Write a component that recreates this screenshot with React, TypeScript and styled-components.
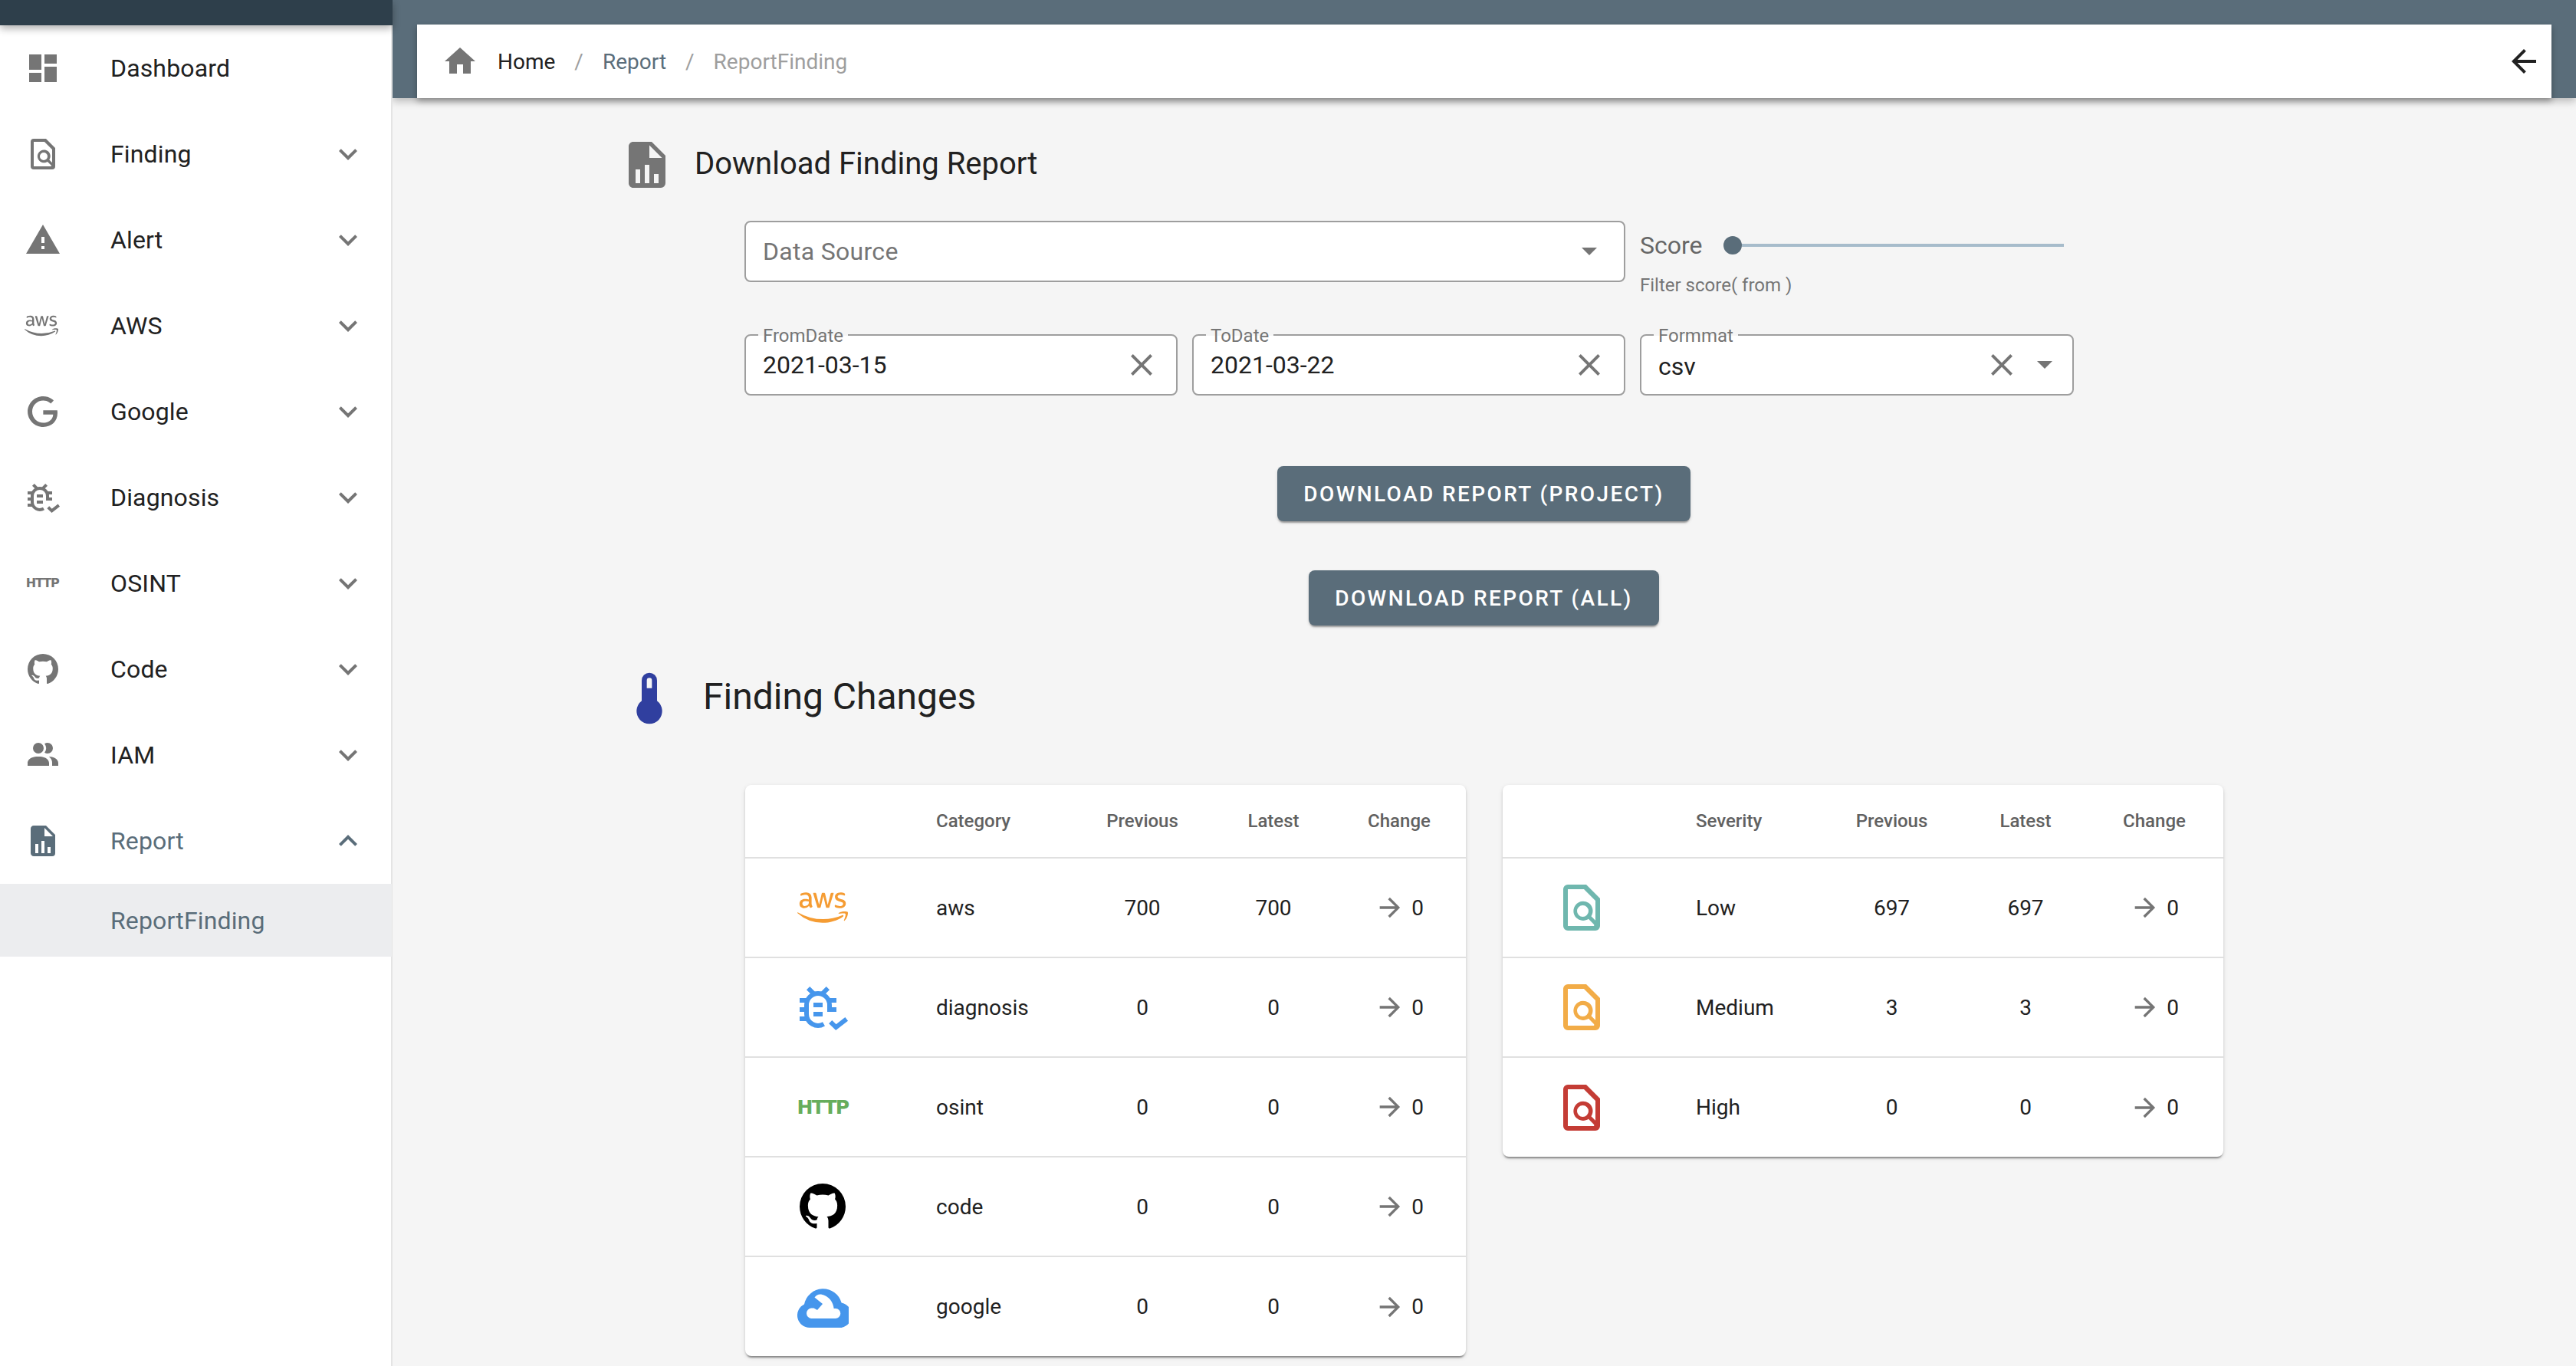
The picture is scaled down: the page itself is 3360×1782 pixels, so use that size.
import React from 'react';
import styled, { createGlobalStyle } from 'styled-components';
import { FaAws } from 'react-icons/fa';

const SLATE = '#5a6d7a';
const GREY = '#757575';

const Global = createGlobalStyle`
  html, body { margin: 0; padding: 0; background: #f5f5f5; }
  body { font-family: Roboto, "Liberation Sans", sans-serif; color: #212121; }
  * { box-sizing: border-box; }
`;

const Page = styled.div`
  display: grid;
  grid-template-columns: 512px 1fr;
  width: 3360px;
  height: 1782px;
  overflow: hidden;
  background: #f5f5f5;
`;

const Sidebar = styled.aside`
  display: flex;
  flex-direction: column;
  background: #fff;
  border-right: 2px solid #e4e4e4;
  height: 100%;
  position: relative;
  z-index: 1;
`;

const SideTop = styled.div`
  height: 33px;
  width: 512px;
  flex: none;
  background: #2e3f4b;
  box-shadow: 0 4px 10px rgba(0, 0, 0, 0.32);
  position: relative;
  z-index: 2;
`;

const NavItem = styled.div`
  display: flex;
  align-items: center;
  height: 112px;
  flex: none;
  padding: 0 32px;
  font-size: 32px;
`;

const NavIcon = styled.span<{ $active?: boolean }>`
  width: 112px;
  flex: none;
  display: flex;
  align-items: center;
  color: ${(p) => (p.$active ? SLATE : GREY)};
`;

const NavLabel = styled.span<{ $active?: boolean }>`
  flex: 1;
  color: ${(p) => (p.$active ? SLATE : '#212121')};
  letter-spacing: 0.15px;
`;

const SubItem = styled.div`
  height: 95px;
  flex: none;
  display: flex;
  align-items: center;
  padding-left: 144px;
  margin-right: -1px;
  background: #ecedef;
  font-size: 32px;
  color: ${SLATE};
  letter-spacing: 0.15px;
`;

const HttpMark = styled.span<{ $size: number; $color: string }>`
  font-family: "DejaVu Sans", sans-serif;
  font-weight: 700;
  font-size: ${(p) => p.$size}px;
  letter-spacing: ${(p) => -p.$size / 14}px;
  color: ${(p) => p.$color};
  line-height: 1;
  display: block;
  width: ${(p) => p.$size * 2.9}px;
  text-align: center;
`;

const Main = styled.main`
  display: flex;
  flex-direction: column;
  min-width: 0;
`;

const TopBand = styled.div`
  background: ${SLATE};
  padding: 32px 32px 0;
  height: 128px;
  flex: none;
  box-shadow: 0 4px 10px rgba(0, 0, 0, 0.25);
`;

const Crumbs = styled.nav`
  height: 96px;
  background: #fff;
  display: flex;
  align-items: center;
  padding: 0 12px 0 32px;
  font-size: 28px;
  box-shadow: 0 4px 8px rgba(0, 0, 0, 0.3);
`;

const CrumbHome = styled.span`
  display: flex;
  color: ${GREY};
  margin-right: 25px;
`;

const Crumb = styled.span<{ $tone: string }>`
  color: ${(p) => p.$tone};
`;

const CrumbSep = styled.span`
  color: #9e9e9e;
  margin: 0 25px;
`;

const CrumbSpacer = styled.span`
  flex: 1;
`;

const Content = styled.div`
  padding: 51px 0 0 296px;
  display: flex;
  flex-direction: column;
`;

const Heading = styled.div<{ $gap: number; $shift: number }>`
  display: flex;
  align-items: center;
  gap: ${(p) => p.$gap}px;
  margin-left: ${(p) => p.$shift}px;
`;

const HeadingIcon = styled.span<{ $color: string }>`
  display: flex;
  color: ${(p) => p.$color};
`;

const H1 = styled.h2`
  margin: 0 0 4px;
  font-size: 40px;
  font-weight: 400;
  color: #212121;
  letter-spacing: 0;
`;

const H2 = styled.h2`
  margin: 0 0 6px;
  font-size: 48px;
  font-weight: 400;
  color: #212121;
`;

const Block = styled.div`
  margin-left: 163px;
  width: 1929px;
`;

const FormGrid = styled.div`
  display: grid;
  grid-template-columns: 565px 565px 566px;
  grid-template-rows: 80px 80px;
  column-gap: 19px;
  row-gap: 68px;
  margin-top: 37px;
`;

const Field = styled.div<{ $span?: number }>`
  grid-column: span ${(p) => p.$span ?? 1};
  position: relative;
  display: flex;
  align-items: center;
  gap: 0;
  padding: 0 22px;
  background: #fff;
  border: 2px solid #9e9e9e;
  border-radius: 8px;
  font-size: 32px;
`;

const FieldLabel = styled.span`
  position: absolute;
  left: 16px;
  top: -14px;
  line-height: 28px;
  padding: 0 6px;
  font-size: 24px;
  color: ${GREY};
  background: linear-gradient(#f5f5f5 50%, #fff 50%);
`;

const Placeholder = styled.span`
  flex: 1;
  color: ${GREY};
  letter-spacing: 0.3px;
`;

const FieldValue = styled.span<{ $drop?: number }>`
  flex: 1;
  color: #212121;
  position: relative;
  top: ${(p) => p.$drop ?? 0}px;
`;

const FieldIcon = styled.span<{ $shift?: number }>`
  display: flex;
  flex: none;
  color: ${GREY};
  margin-right: ${(p) => p.$shift ?? 0}px;
`;

const Caret = styled.span<{ $shift: number }>`
  width: 0;
  height: 0;
  flex: none;
  border-left: 10px solid transparent;
  border-right: 10px solid transparent;
  border-top: 10px solid ${GREY};
  margin-right: ${(p) => p.$shift}px;
`;

const ScoreCell = styled.div`
  display: flex;
  flex-direction: column;
`;

const ScoreRow = styled.div`
  display: flex;
  align-items: center;
  height: 64px;
  flex: none;
`;

const ScoreLabel = styled.span`
  font-size: 32px;
  color: #666;
  width: 109px;
  flex: none;
`;

const Thumb = styled.span`
  width: 24px;
  height: 24px;
  flex: none;
  border-radius: 50%;
  background: ${SLATE};
`;

const Track = styled.span`
  width: 420px;
  height: 4px;
  flex: none;
  background: #a7bccb;
`;

const Helper = styled.span`
  font-size: 24px;
  line-height: 28px;
  margin-top: 6px;
  color: ${GREY};
  white-space: nowrap;
`;

const Buttons = styled.div`
  display: flex;
  flex-direction: column;
  align-items: center;
  gap: 64px;
  margin-top: 92px;
`;

const Button = styled.button`
  height: 72px;
  border: 0;
  padding: 0 34px;
  border-radius: 8px;
  background: ${SLATE};
  color: #fff;
  font-family: inherit;
  font-size: 28px;
  font-weight: 500;
  letter-spacing: 2.4px;
  text-transform: uppercase;
  box-shadow: 0 3px 2px -1px rgba(0, 0, 0, 0.3), 0 2px 4px rgba(0, 0, 0, 0.12);
`;

const ChangesHeading = styled.div`
  margin-top: 55px;
`;

const Tables = styled.div`
  display: flex;
  gap: 48px;
  margin-top: 73px;
  margin-left: 1px;
  align-items: flex-start;
`;

const Card = styled.div`
  width: 940px;
  background: #fff;
  border-radius: 8px;
  box-shadow: 0 4px 2px -2px rgba(0, 0, 0, 0.3), 0 2px 3px rgba(0, 0, 0, 0.14), 0 2px 6px rgba(0, 0, 0, 0.1);
  overflow: hidden;
`;

const Table = styled.table`
  width: 940px;
  table-layout: fixed;
  border-collapse: collapse;
`;

const Th = styled.th<{ $left?: boolean }>`
  height: 95px;
  padding: 0 ${(p) => (p.$left ? '0 0 32px' : '0')};
  font-size: 24px;
  font-weight: 500;
  color: #616161;
  text-align: ${(p) => (p.$left ? 'left' : 'center')};
  border-bottom: 2px solid #e0e0e0;
`;

const Tr = styled.tr`
  &:last-child td { border-bottom: 0; }
`;

const Td = styled.td<{ $left?: boolean }>`
  height: 130px;
  padding: 0 ${(p) => (p.$left ? '0 0 32px' : '0')};
  font-size: 28px;
  color: #212121;
  text-align: ${(p) => (p.$left ? 'left' : 'center')};
  border-bottom: 2px solid #e0e0e0;
`;

const IconTd = styled.td<{ $pad: number }>`
  height: 130px;
  padding: 0 0 0 ${(p) => p.$pad}px;
  border-bottom: 2px solid #e0e0e0;
`;

const IconBox = styled.span<{ $color: string }>`
  width: 72px;
  height: 72px;
  display: flex;
  align-items: center;
  justify-content: center;
  color: ${(p) => p.$color};
`;

const ChangeValue = styled.span`
  display: inline-flex;
  align-items: center;
  gap: 8px;
  vertical-align: middle;
`;

const ArrowWrap = styled.span`
  display: flex;
  color: ${GREY};
`;

type IconProps = { size?: number };
const mk = (d: string) => ({ size = 48 }: IconProps) => (
  <svg width={size} height={size} viewBox="0 0 24 24" fill="currentColor">
    <path fillRule="evenodd" d={d} />
  </svg>
);

const Dashboard = mk('M3 13h8V3H3v10zm0 8h8v-6H3v6zm10 0h8V11h-8v10zm0-18v6h8V3h-8z');
const FileFind = mk('M14,2H6A2,2 0 0,0 4,4V20A2,2 0 0,0 6,22H18A2,2 0 0,0 20,20V8L14,2M6,4H13L18,9V17.58L16.16,15.74C17.44,13.8 16.9,11.2 14.97,9.93C13.03,8.65 10.43,9.19 9.15,11.13C7.87,13.07 8.41,15.67 10.35,16.95C11.75,17.87 13.57,17.87 14.97,16.95L17.42,19.39L17.4,20H6V4M12.5,11A2.5,2.5 0 0,1 15,13.5A2.5,2.5 0 0,1 12.5,16A2.5,2.5 0 0,1 10,13.5A2.5,2.5 0 0,1 12.5,11Z');
const Warning = mk('M1 21h22L12 2 1 21zm12-3h-2v-2h2v2zm0-4h-2v-4h2v4z');
const GoogleG = mk('M21.35,11.1H12.18V13.83H18.69C18.36,17.64 15.19,19.27 12.19,19.27C8.36,19.27 5,16.25 5,12C5,7.9 8.2,4.73 12.2,4.73C15.29,4.73 17.1,6.7 17.1,6.7L19,4.72C19,4.72 16.56,2 12.1,2C6.42,2 2.03,6.8 2.03,12C2.03,17.05 6.16,22 12.25,22C17.6,22 21.5,18.33 21.5,12.91C21.5,11.76 21.35,11.1 21.35,11.1V11.1Z');
const Github = mk('M12,2A10,10 0 0,0 2,12C2,16.42 4.87,20.17 8.84,21.5C9.34,21.58 9.5,21.27 9.5,21C9.5,20.77 9.5,20.14 9.5,19.31C6.73,19.91 6.14,17.97 6.14,17.97C5.68,16.81 5.03,16.5 5.03,16.5C4.12,15.88 5.1,15.9 5.1,15.9C6.1,15.97 6.63,16.93 6.63,16.93C7.5,18.45 8.97,18 9.54,17.76C9.63,17.11 9.89,16.67 10.17,16.42C7.95,16.17 5.62,15.31 5.62,11.5C5.62,10.39 6,9.5 6.65,8.79C6.55,8.54 6.2,7.5 6.75,6.15C6.75,6.15 7.59,5.88 9.5,7.17C10.29,6.95 11.15,6.84 12,6.84C12.85,6.84 13.71,6.95 14.5,7.17C16.41,5.88 17.25,6.15 17.25,6.15C17.8,7.5 17.45,8.54 17.35,8.79C18,9.5 18.38,10.39 18.38,11.5C18.38,15.32 16.04,16.16 13.81,16.41C14.17,16.72 14.5,17.33 14.5,18.26C14.5,19.6 14.5,20.68 14.5,21C14.5,21.27 14.66,21.59 15.17,21.5C19.14,20.16 22,16.42 22,12A10,10 0 0,0 12,2Z');
const People = mk('M16 17V19H2V17S2 13 9 13 16 17 16 17M12.5 7.5A3.5 3.5 0 1 0 9 11A3.5 3.5 0 0 0 12.5 7.5M15.94 13A5.32 5.32 0 0 1 18 17V19H22V17S22 13.37 15.94 13M15 4A3.39 3.39 0 0 0 13.07 4.59A5 5 0 0 1 13.07 10.41A3.39 3.39 0 0 0 15 11A3.5 3.5 0 0 0 15 4Z');
const FileChart = mk('M13,9H18.5L13,3.5V9M6,2H14L20,8V20A2,2 0 0,1 18,22H6C4.89,22 4,21.1 4,20V4C4,2.89 4.89,2 6,2M7,20H9V14H7V20M11,20H13V12H11V20M15,20H17V16H15V20Z');
const Chevron = mk('M16.59 8.59L12 13.17 7.41 8.59 6 10l6 6 6-6z');
const ChevronUp = mk('M12 8l-6 6 1.41 1.41L12 10.83l4.59 4.58L18 14z');
const Home = mk('M10 20v-6h4v6h5v-8h3L12 3 2 12h3v8z');
const ArrowBack = mk('M20 11H7.83l5.59-5.59L12 4l-8 8 8 8 1.41-1.41L7.83 13H20v-2z');
const Close = mk('M19 6.41L17.59 5 12 10.59 6.41 5 5 6.41 10.59 12 5 17.59 6.41 19 12 13.41 17.59 19 19 17.59 13.41 12z');
const Thermometer = mk('M15 13V5A3 3 0 0 0 9 5V13A5 5 0 1 0 15 13M12 4A1 1 0 0 1 13 5V8H11V5A1 1 0 0 1 12 4Z');
const ArrowRight = mk('M4,11V13H16L10.5,18.5L11.92,19.92L19.84,12L11.92,4.08L10.5,5.5L16,11H4Z');

const BugCheck = ({ size = 48 }: IconProps) => (
  <svg width={size} height={size} viewBox="0 0 24 24" fill="currentColor">
    <path d="M12 12H8v-2h4zM12 16H8v-2h4zM2 8h3.4v2H2zM2 12h2.4v2H2zM2 16h3.4v2H2zM14.6 8H18v2h-3.4zM15.6 12H18v2h-2.4zM5 4.41 6.41 3l2.6 2.6-1.4 1.4zM15 4.41 13.59 3l-2.6 2.6 1.4 1.4z" />
    <path d="M15 14V11A5 5 0 0 0 5 11V15A5 5 0 0 0 12.5 19.3" fill="none" stroke="currentColor" strokeWidth="2" />
    <path d="M15.4 18.4l2.4 2.3 4.6-3.6" fill="none" stroke="currentColor" strokeWidth="2" />
  </svg>
);

const GoogleCloud = () => (
  <svg width={67} height={54} viewBox="0 0 67 54" fill="currentColor">
    <path
      fillRule="evenodd"
      d="M16 54A16 16 0 0 1 9 23.6A25 25 0 0 1 57.6 21.5A16.4 16.4 0 0 1 51 54ZM18 42H49.5A6.5 6.5 0 0 0 50 29H47.6C47 21 41 12 31 10.5C27.5 10 25 11.5 22.5 14.5L33 23L26 31L21.5 28.5H18A6.8 6.8 0 0 0 18 42Z"
    />
  </svg>
);

const navItems: [string, React.ReactNode][] = [
  ['Finding', <FileFind />],
  ['Alert', <Warning />],
  ['AWS', <FaAws size={44} />],
  ['Google', <GoogleG />],
  ['Diagnosis', <BugCheck />],
  ['OSINT', <HttpMark $size={16} $color={GREY}>HTTP</HttpMark>],
  ['Code', <Github />],
  ['IAM', <People />],
];

type Row = { icon: React.ReactNode; color: string; name: string; prev: number; latest: number };

const categories: Row[] = [
  { icon: <FaAws size={66} />, color: '#f59c33', name: 'aws', prev: 700, latest: 700 },
  { icon: <BugCheck size={72} />, color: '#4696ec', name: 'diagnosis', prev: 0, latest: 0 },
  { icon: <HttpMark $size={25} $color="#66ad5c">HTTP</HttpMark>, color: '#66ad5c', name: 'osint', prev: 0, latest: 0 },
  { icon: <Github size={72} />, color: '#000', name: 'code', prev: 0, latest: 0 },
  { icon: <GoogleCloud />, color: '#4696ec', name: 'google', prev: 0, latest: 0 },
];

const severities: Row[] = [
  { icon: <FileFind size={72} />, color: '#6fb7ae', name: 'Low', prev: 697, latest: 697 },
  { icon: <FileFind size={72} />, color: '#f2ac47', name: 'Medium', prev: 3, latest: 3 },
  { icon: <FileFind size={72} />, color: '#c43c35', name: 'High', prev: 0, latest: 0 },
];

const ChangeTable = ({ title, rows, widths, pad }: { title: string; rows: Row[]; widths: number[]; pad: number }) => (
  <Card>
    <Table>
      <colgroup>
        {widths.map((w, i) => (
          <col key={i} width={w} />
        ))}
      </colgroup>
      <thead>
        <tr>
          <Th />
          <Th $left>{title}</Th>
          <Th>Previous</Th>
          <Th>Latest</Th>
          <Th>Change</Th>
        </tr>
      </thead>
      <tbody>
        {rows.map((r) => (
          <Tr key={r.name}>
            <IconTd $pad={pad}>
              <IconBox $color={r.color}>{r.icon}</IconBox>
            </IconTd>
            <Td $left>{r.name}</Td>
            <Td>{r.prev}</Td>
            <Td>{r.latest}</Td>
            <Td>
              <ChangeValue>
                <ArrowWrap>
                  <ArrowRight size={40} />
                </ArrowWrap>
                0
              </ChangeValue>
            </Td>
          </Tr>
        ))}
      </tbody>
    </Table>
  </Card>
);

export default function App() {
  return (
    <Page>
      <Global />
      <Sidebar>
        <SideTop />
        <NavItem>
          <NavIcon>
            <Dashboard />
          </NavIcon>
          <NavLabel>Dashboard</NavLabel>
        </NavItem>
        {navItems.map(([label, icon]) => (
          <NavItem key={label}>
            <NavIcon>{icon}</NavIcon>
            <NavLabel>{label}</NavLabel>
            <NavIcon as="span" style={{ width: 48 }}>
              <Chevron />
            </NavIcon>
          </NavItem>
        ))}
        <NavItem>
          <NavIcon $active>
            <FileChart />
          </NavIcon>
          <NavLabel $active>Report</NavLabel>
          <NavIcon $active style={{ width: 48 }}>
            <ChevronUp />
          </NavIcon>
        </NavItem>
        <SubItem>ReportFinding</SubItem>
      </Sidebar>
      <Main>
        <TopBand>
          <Crumbs>
            <CrumbHome>
              <Home />
            </CrumbHome>
            <Crumb $tone="#212121">Home</Crumb>
            <CrumbSep>/</CrumbSep>
            <Crumb $tone={SLATE}>Report</Crumb>
            <CrumbSep>/</CrumbSep>
            <Crumb $tone="#9e9e9e">ReportFinding</Crumb>
            <CrumbSpacer />
            <ArrowBack />
          </Crumbs>
        </TopBand>
        <Content>
          <Heading $gap={26} $shift={0}>
            <HeadingIcon $color={GREY}>
              <FileChart size={72} />
            </HeadingIcon>
            <H1>Download Finding Report</H1>
          </Heading>
          <Block>
            <FormGrid>
              <Field $span={2}>
                <Placeholder>Data Source</Placeholder>
                <Caret $shift={13} />
              </Field>
              <ScoreCell>
                <ScoreRow>
                  <ScoreLabel>Score</ScoreLabel>
                  <Thumb />
                  <Track />
                </ScoreRow>
                <Helper>Filter score( from )</Helper>
              </ScoreCell>
              <Field>
                <FieldLabel>FromDate</FieldLabel>
                <FieldValue>2021-03-15</FieldValue>
                <FieldIcon $shift={-1}>
                  <Close />
                </FieldIcon>
              </Field>
              <Field>
                <FieldLabel>ToDate</FieldLabel>
                <FieldValue>2021-03-22</FieldValue>
                <FieldIcon $shift={-1}>
                  <Close />
                </FieldIcon>
              </Field>
              <Field>
                <FieldLabel>Formmat</FieldLabel>
                <FieldValue $drop={2}>csv</FieldValue>
                <FieldIcon $shift={22}>
                  <Close />
                </FieldIcon>
                <Caret $shift={4} />
              </Field>
            </FormGrid>
            <Buttons>
              <Button>Download Report (Project)</Button>
              <Button>Download Report (All)</Button>
            </Buttons>
          </Block>
          <ChangesHeading>
            <Heading $gap={30} $shift={-1}>
              <HeadingIcon $color="#303f9f">
                <Thermometer size={80} />
              </HeadingIcon>
              <H2>Finding Changes</H2>
            </Heading>
          </ChangesHeading>
          <Block>
            <Tables>
              <ChangeTable title="Category" rows={categories} widths={[217, 207, 188, 154, 174]} pad={65} />
              <ChangeTable title="Severity" rows={severities} widths={[220, 191, 193, 156, 180]} pad={67} />
            </Tables>
          </Block>
        </Content>
      </Main>
    </Page>
  );
}
